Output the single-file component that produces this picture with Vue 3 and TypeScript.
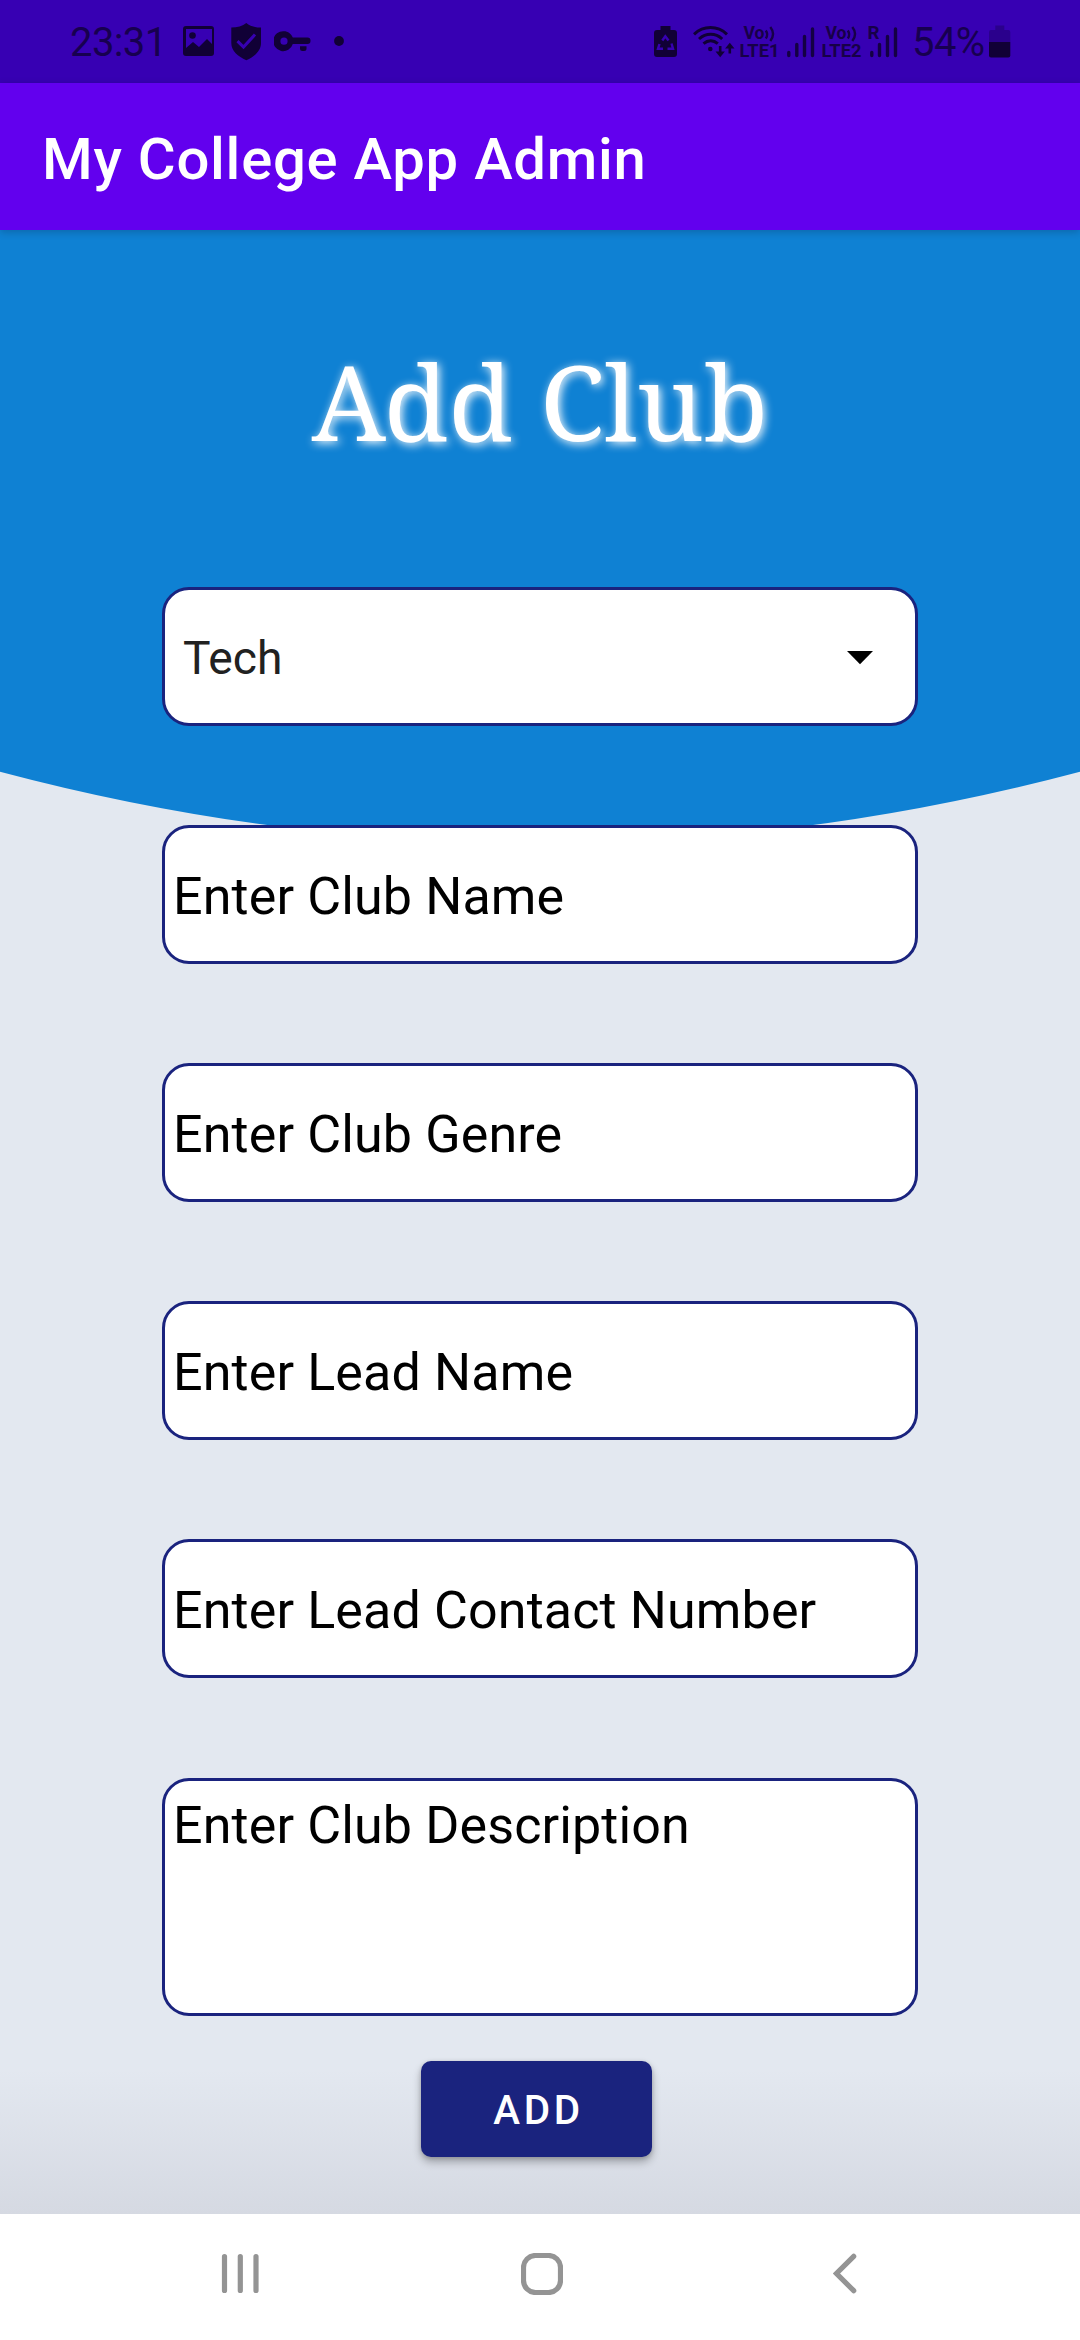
<script setup lang="ts">
interface Field {
  id: string
  hint: string
  multiline?: boolean
}

const category = 'Tech'

const fields: Field[] = [
  { id: 'club-name', hint: 'Enter Club Name' },
  { id: 'club-genre', hint: 'Enter Club Genre' },
  { id: 'lead-name', hint: 'Enter Lead Name' },
  { id: 'lead-contact', hint: 'Enter Lead Contact Number' },
  { id: 'club-description', hint: 'Enter Club Description', multiline: true },
]
</script>

<template>
  <div class="screen">
    <header class="status">
      <div class="group left">
        <span class="time">23:31</span>
        <svg class="photo" width="31" height="83" viewBox="183 0 31 83">
          <path fill-rule="evenodd" d="M186 26h25a3 3 0 0 1 3 3v24a3 3 0 0 1-3 3h-25a3 3 0 0 1-3-3V29a3 3 0 0 1 3-3zM186 29v19l7-6 6 5 8-8 5 5V29z" />
          <circle cx="192.500" cy="35.500" r="3.300" />
        </svg>
        <svg class="shield" width="31" height="83" viewBox="231 0 31 83">
          <path d="M246.300 23c3.500 3 9 4.600 14.700 4.600V43c0 8-6.500 13.500-14.700 17.200C238 56.500 231.300 51 231.300 43V27.600c5.800 0 11.500-1.600 15-4.600z" />
          <path class="cut" d="M237.500 41.200l6 5.800 11.500-12.500" />
        </svg>
        <svg class="key" width="37" height="83" viewBox="274 0 37 83">
          <path fill-rule="evenodd" d="M284 31.200c4 0 7.300 2.500 8.800 6.300H307.500a3 3 0 0 1 3 3v.500a3 3 0 0 1-3 3H292.800a10 10 0 1 1-8.800-12.800zM284 37.600a3.600 3.600 0 1 0 0 7.200 3.600 3.600 0 0 0 0-7.200z" />
          <path d="M300 46.200h6.500v2.300a2.500 2.500 0 0 1-2.500 2.500h-1.500a2.500 2.500 0 0 1-2.500-2.500z" />
        </svg>
        <svg class="more" width="10" height="83" viewBox="334 0 10 83">
          <circle cx="339" cy="41" r="4.900" />
        </svg>
      </div>

      <div class="group right">
        <svg width="24" height="83" viewBox="654 0 24 83">
          <path d="M660.500 26h10v4h3.500a3 3 0 0 1 3 3v21a3 3 0 0 1-3 3h-17a3 3 0 0 1-3-3V33a3 3 0 0 1 3-3h3.500z" />
          <path class="recycle" d="M662.300 40.500l3-4.200 3.200 4.200M659.500 44l-1.500 4.700h5M671.500 43.500l1.500 5.200h-5.500" />
        </svg>
        <svg class="wifi" width="42" height="83" viewBox="693 0 42 83">
          <path class="stroke" d="M694 34.300c9.500-9 23.500-9 33 0M699 39c7-6.200 16.500-6.200 23.200 0M703.500 43.700c4.500-3.800 10-3.800 14.300 0" />
          <circle cx="710.300" cy="49" r="2.300" />
          <path class="stroke thin" d="M720.200 46v9M729.800 53.500V45" />
          <path d="M715.500 51.500h9.400l-4.700 5.700zM725.100 48.500h9.400L729.800 42.800z" />
        </svg>
        <svg class="lte" width="40" height="83" viewBox="740 0 40 83">
          <text x="743.500" y="39.300" textLength="21" lengthAdjust="spacingAndGlyphs">Vo</text>
          <path class="wave" d="M765.800 30.500q2.800 4 0 8M770.300 27q5.500 7 0 14" />
          <text x="739.500" y="57" textLength="40" lengthAdjust="spacingAndGlyphs">LTE1</text>
        </svg>
        <svg class="bars" width="28" height="83" viewBox="787 0 28 83">
          <path class="bar" d="M788.800 52.500v3M796.800 44.500v11M804.500 36.500v19M812.500 29v26.500" />
        </svg>
        <svg class="lte" width="40" height="83" viewBox="740 0 40 83">
          <text x="743.500" y="39.300" textLength="21" lengthAdjust="spacingAndGlyphs">Vo</text>
          <path class="wave" d="M765.800 30.500q2.800 4 0 8M770.300 27q5.500 7 0 14" />
          <text x="739.500" y="57" textLength="40" lengthAdjust="spacingAndGlyphs">LTE2</text>
        </svg>
        <svg class="roaming" width="30" height="83" viewBox="868 0 30 83">
          <text x="867.500" y="39" textLength="12" lengthAdjust="spacingAndGlyphs">R</text>
          <path class="bar" d="M871.800 52.500v3M879.500 44.500v11M887.500 36.500v19M895.500 29v26.500" />
        </svg>
        <span class="percent">54%</span>
        <svg class="battery" width="22" height="83" viewBox="989 0 22 83">
          <path class="empty" d="M995.300 25.500h9v4.500h4a2 2 0 0 1 2 2v10H989V32a2 2 0 0 1 2-2h4.300z" />
          <path d="M989 42h21.300v13.500a2 2 0 0 1-2 2H991a2 2 0 0 1-2-2z" />
        </svg>
      </div>
    </header>

    <div class="appbar">My College App Admin</div>

    <main class="content">
      <svg class="backdrop" width="1080" height="620" viewBox="0 230 1080 620">
        <path d="M0 230H1080V771.700Q540 915 0 771.700Z" />
      </svg>

      <h1 class="title"><span>Add Club</span></h1>

      <div class="box spinner" role="combobox">
        <span>{{ category }}</span>
        <svg width="26" height="14" viewBox="0 0 26 14"><path d="M0 0h26L13 13.300z" /></svg>
      </div>

      <div
        v-for="field in fields"
        :key="field.id"
        class="box field"
        :class="{ multiline: field.multiline }"
        role="textbox"
      >{{ field.hint }}</div>

      <button class="add" type="button">ADD</button>
    </main>

    <nav class="navbar">
      <svg class="recents" width="40" height="42" viewBox="0 0 40 42">
        <path d="M3.500 3.500v34M19.300 3.500v34M35 3.500v34" />
      </svg>
      <svg class="home" width="42" height="42" viewBox="0 0 42 42">
        <rect x="2.500" y="2.500" width="37" height="37" rx="12" />
      </svg>
      <svg class="back" width="26" height="42" viewBox="0 0 26 42">
        <path d="M20.700 3.300L3.500 20.500l17.200 17.200" />
      </svg>
    </nav>
  </div>
</template>

<style>
body {
  margin: 0;
}
</style>

<style scoped>
.screen {
  width: 1080px;
  height: 2340px;
  display: flex;
  flex-direction: column;
  overflow: hidden;
  font-family: Roboto, "Liberation Sans", sans-serif;
}

svg {
  display: block;
  flex: none;
}

.status {
  height: 83px;
  flex: none;
  display: flex;
  justify-content: space-between;
  background: #3700b3;
  color: #170050;
  fill: #110036;
}

.group {
  display: flex;
}

.left {
  padding-left: 70px;
}

.right {
  padding-right: 69px;
}

.time,
.percent {
  font-size: 40px;
  line-height: 86px;
  white-space: nowrap;
}

.time {
  width: 113px;
  letter-spacing: -0.6px;
}

.shield {
  margin-left: 17px;
}

.key {
  margin-left: 12px;
}

.more {
  margin-left: 23px;
}

.cut {
  fill: none;
  stroke: #3700b3;
  stroke-width: 3;
}

.recycle {
  fill: none;
  stroke: #3700b3;
  stroke-width: 2.4;
}

.wifi {
  margin-left: 15px;
}

.stroke {
  fill: none;
  stroke: #110036;
  stroke-width: 3;
}

.thin {
  stroke-width: 2.6;
}

.lte {
  margin-left: 5px;
}

.lte text,
.roaming text {
  font: 700 17.500px Roboto, sans-serif;
  fill: #170048;
}

.wave {
  fill: none;
  stroke: #170048;
  stroke-width: 2.4;
}

.bars {
  margin-left: 7px;
}

.bars + .lte {
  margin-left: 7px;
}

.bar {
  fill: none;
  stroke: #140044;
  stroke-width: 3.4;
  stroke-linecap: round;
}

.roaming {
  margin-left: 6px;
}

.percent {
  width: 77px;
  margin-left: 14px;
  letter-spacing: -0.6px;
}

.empty {
  fill: #2a008c;
}

.appbar {
  position: relative;
  z-index: 1;
  height: 147px;
  flex: none;
  box-sizing: border-box;
  padding-left: 42px;
  background: #6200ee;
  box-shadow: 0 2px 8px rgba(0, 0, 0, 0.2);
  color: #fff;
  font-size: 58px;
  font-weight: 500;
  line-height: 153px;
  letter-spacing: 0.75px;
  white-space: nowrap;
}

.content {
  position: relative;
  height: 1984px;
  flex: none;
  display: flex;
  flex-direction: column;
  align-items: center;
  background: linear-gradient(#e3e8f0 0 1840px, #d5d9e2 1984px);
}

.backdrop {
  position: absolute;
  top: 0;
  left: 0;
  fill: #0f81d3;
}

.title {
  position: relative;
  height: 357px;
  margin: 0;
  color: #fff;
  font: 400 105px/341px "Noto Serif", "DejaVu Serif Condensed", "DejaVu Serif", serif;
  text-shadow: 2px 2px 10px #fff;
  white-space: nowrap;
}

.title span {
  display: inline-block;
}

.box {
  position: relative;
  width: 756px;
  height: 139px;
  flex: none;
  box-sizing: border-box;
  margin-bottom: 99px;
  border: 3px solid #1a237e;
  border-radius: 27px;
  background: #fff;
  white-space: nowrap;
}

.spinner {
  display: flex;
  align-items: center;
  justify-content: space-between;
  padding: 3px 42px 0 18px;
  color: #212121;
  font-size: 46.200px;
}

.field {
  padding-left: 8px;
  color: #000;
  font-size: 52px;
  line-height: 137px;
  letter-spacing: 0.14px;
}

.multiline {
  height: 238px;
  margin-top: 1px;
  margin-bottom: 45px;
  line-height: 90px;
}

.add {
  width: 231px;
  height: 96px;
  flex: none;
  margin: 0 7px 0 0;
  padding: 4px 0 0 4px;
  border: 0;
  border-radius: 10px;
  background: #1a237e;
  box-shadow: 0 5px 8px rgba(0, 0, 0, 0.28), 0 1px 4px rgba(0, 0, 0, 0.15);
  color: #fff;
  font: 500 40.400px/1 Roboto, sans-serif;
  letter-spacing: 3.600px;
}

.navbar {
  height: 126px;
  flex: none;
  display: flex;
  align-items: flex-start;
  padding-top: 39px;
  box-sizing: border-box;
  background: #fff;
  fill: none;
  stroke: #949494;
  stroke-width: 5.200;
  stroke-linecap: round;
}

.recents {
  margin-left: 220.500px;
}

.home {
  margin-left: 260.500px;
}

.back {
  margin-left: 269.500px;
}
</style>
